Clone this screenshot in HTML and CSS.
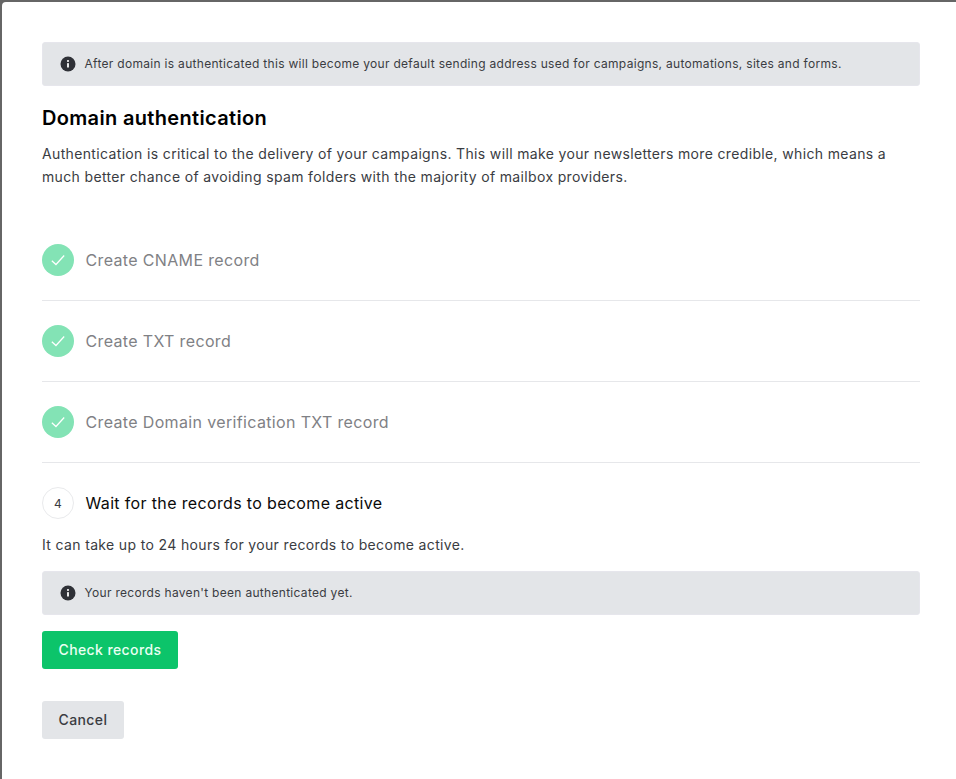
FILE: index.html
```html
<!DOCTYPE html>
<html lang="en">
<head>
<meta charset="utf-8">
<title>Domain authentication</title>
<link rel="stylesheet" href="styles.css">
</head>
<body>
<main class="modal">
  <div class="alert">
    <svg class="alert-icon" viewBox="0 0 16 16" aria-hidden="true"><circle cx="8" cy="8" r="7.5" fill="#2f3137"/><rect x="7.1" y="7" width="1.8" height="4.6" rx=".4" fill="#fff"/><circle cx="8" cy="5" r="1.05" fill="#fff"/></svg>
    <span class="alert-text">After domain is authenticated this will become your default sending address used for campaigns, automations, sites and forms.</span>
  </div>
  <h1 class="title">Domain authentication</h1>
  <p class="lead">Authentication is critical to the delivery of your campaigns. This will make your newsletters more credible, which means a much better chance of avoiding spam folders with the majority of mailbox providers.</p>
  <ol class="steps">
    <li class="step done">
      <span class="badge"><svg viewBox="0 0 16 16" aria-hidden="true"><path d="M2.5 8.6 6.2 12l7.3-8"/></svg></span>
      <span>Create CNAME record</span>
    </li>
    <li class="step done">
      <span class="badge"><svg viewBox="0 0 16 16" aria-hidden="true"><path d="M2.5 8.6 6.2 12l7.3-8"/></svg></span>
      <span>Create TXT record</span>
    </li>
    <li class="step done">
      <span class="badge"><svg viewBox="0 0 16 16" aria-hidden="true"><path d="M2.5 8.6 6.2 12l7.3-8"/></svg></span>
      <span>Create Domain verification TXT record</span>
    </li>
    <li class="step current">
      <span class="badge">4</span>
      <span>Wait for the records to become active</span>
    </li>
  </ol>
  <p class="note">It can take up to 24 hours for your records to become active.</p>
  <div class="alert">
    <svg class="alert-icon" viewBox="0 0 16 16" aria-hidden="true"><circle cx="8" cy="8" r="7.5" fill="#2f3137"/><rect x="7.1" y="7" width="1.8" height="4.6" rx=".4" fill="#fff"/><circle cx="8" cy="5" r="1.05" fill="#fff"/></svg>
    <span class="alert-text">Your records haven't been authenticated yet.</span>
  </div>
  <div class="actions">
    <button class="btn btn-primary" type="button">Check records</button>
    <button class="btn btn-secondary" type="button">Cancel</button>
  </div>
</main>
</body>
</html>
```
FILE: styles.css
```css
* { box-sizing: border-box; }
html, body { margin: 0; height: 100%; overflow: hidden; }
body {
  background: #666;
  padding: 2px 0 0 2px;
  font-family: Inter, "Liberation Sans", sans-serif;
  color: #3a3c42;
}
.modal {
  background: #fff;
  border-radius: 4px 0 0 0;
  height: 100%;
  padding: 40px 36px 0 40px;
}
.alert {
  display: flex;
  align-items: center;
  gap: 8.5px;
  height: 44px;
  padding: 0 18px;
  background: #e3e5e8;
  border: 1px solid #e6e6ec;
  border-radius: 3px;
  font-size: 12px;
  letter-spacing: 0.3px;
}
.alert-text { padding-bottom: 1px; }
.alert-icon { width: 16px; height: 16px; flex: none; margin-left: -1px; }
.title {
  margin: 19px 0 0;
  font-size: 20px;
  line-height: 26px;
  font-weight: 600;
  letter-spacing: 0.33px;
  color: #000;
}
.lead {
  margin: 11px 0 0;
  font-size: 14px;
  line-height: 23px;
  letter-spacing: 0.35px;
}
.steps { list-style: none; margin: 32px 0 0; padding: 0; }
.step {
  display: flex;
  align-items: center;
  gap: 11.5px;
  padding: 24px 0;
  font-size: 16px;
  letter-spacing: 0.35px;
}
.step.done { border-bottom: 1px solid #e6e7ea; color: #7f8185; }
.step.current { color: #0a0a0a; padding-bottom: 15px; }
.badge {
  width: 32px;
  height: 32px;
  border-radius: 50%;
  display: flex;
  align-items: center;
  justify-content: center;
  flex: none;
}
.done .badge { background: #83e3b5; }
.done .badge svg { width: 18px; height: 18px; fill: none; stroke: #fff; stroke-width: 1.1; }
.current .badge {
  border: 1px solid #e9eaec;
  font-size: 12px;
  letter-spacing: 0;
  color: #3a3c42;
}
.note {
  margin: 0 0 15px;
  font-size: 14px;
  line-height: 22px;
  letter-spacing: 0.35px;
}
.actions {
  display: flex;
  flex-direction: column;
  align-items: flex-start;
  gap: 32px;
  margin-top: 16px;
}
.btn {
  border: 0;
  height: 38px;
  padding: 0 16.5px 1px;
  border-radius: 3px;
  font: 500 14px Inter, "Liberation Sans", sans-serif;
  letter-spacing: 0.4px;
}
.btn-primary { background: #0cc46a; color: #eafff3; }
.btn-secondary { background: #e3e5e8; color: #3a3c42; }
```
